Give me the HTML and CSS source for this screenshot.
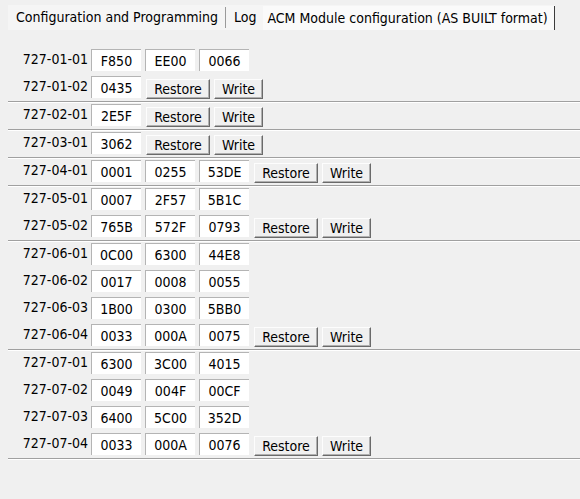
FILE: index.html
```html
<!DOCTYPE html>
<html>
<head>
<meta charset="utf-8">
<title>ACM Module configuration</title>
<link rel="stylesheet" href="styles.css">
</head>
<body>
<div class="tabs">
  <div class="tab">Configuration and Programming</div>
  <span class="tab-sep"></span>
  <div class="tab">Log</div>
  <div class="tab tab-active">ACM Module configuration (AS BUILT format)</div>
</div>

<div class="tab-page">
  <section class="group">
    <div class="row"><span class="addr">727-01-01</span><span class="cell">F850</span><span class="cell">EE00</span><span class="cell">0066</span></div>
    <div class="row"><span class="addr">727-01-02</span><span class="cell">0435</span><button class="btn btn-restore">Restore</button><button class="btn btn-write">Write</button></div>
  </section>
  <section class="group">
    <div class="row"><span class="addr">727-02-01</span><span class="cell">2E5F</span><button class="btn btn-restore">Restore</button><button class="btn btn-write">Write</button></div>
  </section>
  <section class="group">
    <div class="row"><span class="addr">727-03-01</span><span class="cell">3062</span><button class="btn btn-restore">Restore</button><button class="btn btn-write">Write</button></div>
  </section>
  <section class="group">
    <div class="row"><span class="addr">727-04-01</span><span class="cell">0001</span><span class="cell">0255</span><span class="cell">53DE</span><button class="btn btn-restore">Restore</button><button class="btn btn-write">Write</button></div>
  </section>
  <section class="group">
    <div class="row"><span class="addr">727-05-01</span><span class="cell">0007</span><span class="cell">2F57</span><span class="cell">5B1C</span></div>
    <div class="row"><span class="addr">727-05-02</span><span class="cell">765B</span><span class="cell">572F</span><span class="cell">0793</span><button class="btn btn-restore">Restore</button><button class="btn btn-write">Write</button></div>
  </section>
  <section class="group">
    <div class="row"><span class="addr">727-06-01</span><span class="cell">0C00</span><span class="cell">6300</span><span class="cell">44E8</span></div>
    <div class="row"><span class="addr">727-06-02</span><span class="cell">0017</span><span class="cell">0008</span><span class="cell">0055</span></div>
    <div class="row"><span class="addr">727-06-03</span><span class="cell">1B00</span><span class="cell">0300</span><span class="cell">5BB0</span></div>
    <div class="row"><span class="addr">727-06-04</span><span class="cell">0033</span><span class="cell">000A</span><span class="cell">0075</span><button class="btn btn-restore">Restore</button><button class="btn btn-write">Write</button></div>
  </section>
  <section class="group">
    <div class="row"><span class="addr">727-07-01</span><span class="cell">6300</span><span class="cell">3C00</span><span class="cell">4015</span></div>
    <div class="row"><span class="addr">727-07-02</span><span class="cell">0049</span><span class="cell">004F</span><span class="cell">00CF</span></div>
    <div class="row"><span class="addr">727-07-03</span><span class="cell">6400</span><span class="cell">5C00</span><span class="cell">352D</span></div>
    <div class="row"><span class="addr">727-07-04</span><span class="cell">0033</span><span class="cell">000A</span><span class="cell">0076</span><button class="btn btn-restore">Restore</button><button class="btn btn-write">Write</button></div>
  </section>
</div>
</body>
</html>
```

FILE: styles.css
```css
html, body {
  margin: 0;
  background: #f0f0f0;
}

body {
  font-family: "DejaVu Sans Condensed", "DejaVu Sans", sans-serif;
  font-size: 14px;
  color: #000;
}

/* tab strip */
.tabs {
  display: flex;
  align-items: center;
  align-self: flex-start;
  width: max-content;
  height: 25px;
  margin: 5px 0 0 8px;
  background: #f5f5f5;
}

.tab {
  padding: 0 7px 0 8px;
  line-height: 25px;
  white-space: nowrap;
}

.tab-sep {
  width: 1px;
  height: 21px;
  background: #9a9a9a;
}

.tab-active {
  padding: 0 6px 0 4px;
  background: #fafafa;
  border-right: 1px solid #3c3c3c;
  line-height: 24px;
}

/* page content */
.tab-page {
  margin-top: 18px;
}

.group {
  margin-left: 8px;
  padding: 1px 0 3px;
  border-bottom: 1px solid #a0a0a0;
  box-shadow: 0 1px 0 #ffffff;
  margin-bottom: 1px;
  display: flex;
  flex-direction: column;
  gap: 5px;
}

.row {
  display: flex;
  align-items: flex-start;
  height: 22px;
  gap: 4px;
}

.addr {
  width: 80px;
  margin-right: -1px;
  text-align: right;
  line-height: 20px;
}

.cell {
  box-sizing: border-box;
  width: 50px;
  height: 22px;
  line-height: 22px;
  text-align: center;
  background: #ffffff;
  border-top: 1px solid #b4b4b4;
  border-left: 1px solid #b4b4b4;
}

.btn {
  box-sizing: border-box;
  height: 20px;
  margin-top: 3px;
  padding: 0;
  font: inherit;
  color: #000;
  background: #f0f0f0;
  border: 1px solid;
  border-color: #fdfdfd #6a6a6a #6a6a6a #fdfdfd;
  box-shadow: inset -1px -1px 0 #b0b0b0;
  line-height: 17px;
}

.cell + .btn {
  margin-left: 1px;
}

.btn-restore {
  width: 64px;
}

.btn-write {
  width: 49px;
}
```
